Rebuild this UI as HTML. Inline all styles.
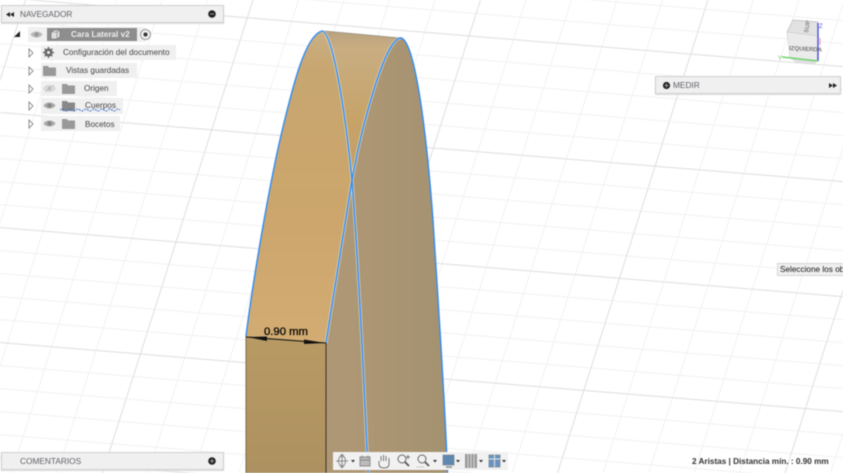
<!DOCTYPE html>
<html lang="es"><head><meta charset="utf-8"><title>Medir</title>
<style>
html,body{margin:0;padding:0;background:#fff}
#r{position:relative;width:843px;height:473px;overflow:hidden;background:#fff;font-family:"Liberation Sans",sans-serif;filter:blur(.55px)}
#r>svg{position:absolute;left:0;top:0}
.p{position:absolute;background:#f0f0f0;box-sizing:border-box}
.b{border:1px solid #cfcfcf;box-shadow:0 1px 1px #ddd}
.t{position:absolute;white-space:nowrap}
.n{font-size:8.3px;color:#5f5f66;line-height:12px}
.row{font-size:8.2px;color:#444;line-height:12px}
</style></head><body><div id="r">
<svg width="843" height="473" viewBox="0 0 843 473">
<defs>
<linearGradient id="lf" x1="0" y1="31" x2="0" y2="343" gradientUnits="userSpaceOnUse"><stop offset="0" stop-color="#c9b086"/><stop offset=".12" stop-color="#c8a670"/><stop offset=".6" stop-color="#cca66c"/><stop offset="1" stop-color="#d2ac72"/></linearGradient>
<linearGradient id="tb" x1="0" y1="31" x2="0" y2="180" gradientUnits="userSpaceOnUse"><stop offset="0" stop-color="#b9a27f"/><stop offset=".12" stop-color="#c9ae82"/><stop offset=".6" stop-color="#c7a368"/><stop offset="1" stop-color="#c4a068"/></linearGradient>
<linearGradient id="rf" x1="352" y1="0" x2="447" y2="0" gradientUnits="userSpaceOnUse"><stop offset="0" stop-color="#ae9775"/><stop offset="1" stop-color="#a49270"/></linearGradient>
<linearGradient id="fr" x1="0" y1="337" x2="0" y2="473" gradientUnits="userSpaceOnUse"><stop offset="0" stop-color="#b89a64"/><stop offset="1" stop-color="#ad9160"/></linearGradient>
<pattern id="g1" patternUnits="userSpaceOnUse" width="44.34" height="22.42" patternTransform="matrix(1 .082 -.318 1 175.7 241.4)"><path d="M0 .5H44.34M.5 0V22.42" stroke="#f2f2f2" stroke-width="1" fill="none"/></pattern>
<pattern id="g2" patternUnits="userSpaceOnUse" width="221.7" height="112.1" patternTransform="matrix(1 .082 -.318 1 175.7 241.4)"><path d="M0 .5H221.7M.5 0V112.1" stroke="#e0e0e0" stroke-width="1" fill="none"/></pattern>
</defs>
<rect width="843" height="473" fill="url(#g1)"/>
<rect width="843" height="473" fill="url(#g2)"/>
<!-- upper band -->
<path d="M322,31 L401,38 C385,38 362,125 352,180 C344,100 332,33 322,31Z" fill="url(#tb)"/>
<path d="M324,31 L400,38" stroke="#8d8270" stroke-width="1" fill="none" opacity=".7"/>
<!-- right face + lower strip -->
<path d="M401,38 C412,40 424,100 433,220 C438,300 445,400 447.5,473 L326,473 L326,343 C335,285 345,225 352,180 C362,125 385,38 401,38Z" fill="url(#rf)"/>
<!-- left face -->
<path d="M246,336 C253,280 270,180 283,127 C292,90 305,35 322,31 C332,33 344,100 352,180 C345,225 335,285 326,343Z" fill="url(#lf)"/>
<!-- front block -->
<path d="M246,336 L326,343 L326,473 L246,473Z" fill="url(#fr)"/>
<path d="M246,336 V473" stroke="#7d6c4c" stroke-width="1"/>
<path d="M326,343 V473" stroke="#3a3222" stroke-width="1"/>
<!-- light inner edges -->
<g fill="none" stroke="#e6dcc4" stroke-width="3" opacity=".8">
<path d="M322,31 C332,33 344,100 352,180 C358,260 364,380 368,473"/>
<path d="M401,38 C385,38 362,125 352,180 C345,225 335,285 326,343"/>
</g>
<!-- blue edges -->
<g fill="none" stroke="#2f8cf5" stroke-width="1.4">
<path d="M246,336 C253,280 270,180 283,127 C292,90 305,35 322,31 C332,33 344,100 352,180 C358,260 364,380 368,473"/>
<path d="M447.5,473 C445,400 438,300 433,220 C424,100 412,40 401,38 C385,38 362,125 352,180 C345,225 335,285 326,343"/>
</g>
<!-- dimension -->
<path d="M246,337 L326,343" stroke="#111" stroke-width="1.1"/>
<path d="M247,337 L267,336.5 L267,341Z M325,343 L304,339.5 L304,344Z" fill="#111"/>
<!-- cube -->
<g>
<path d="M793,20 L818,22 L818,36 L787,32Z" fill="#e2e2e2" stroke="#bdbdbd" stroke-width=".7"/>
<path d="M787,32 L818,36 L817,61 L790,58Z" fill="#ebebeb" stroke="#cfcfcf" stroke-width=".6"/>
<path d="M790,58 L817,61 L815,64 L795,62Z" fill="#d0d0d0" opacity=".7"/>
<path d="M818,23 V61" stroke="#4a4ee0" stroke-width="1.4"/>
<path d="M782,57 L818,61" stroke="#6fd26f" stroke-width="1.4"/>
<path d="M820,38 V45" stroke="#f09a9a" stroke-width="1"/>
<text x="778" y="60" font-size="6" fill="#5fd05f" font-family="Liberation Sans">Y</text>
<text x="819" y="28" font-size="6" fill="#5a5ee6" font-family="Liberation Sans">Z</text>
<text x="789" y="50" font-size="6" fill="#777" font-family="Liberation Sans" font-weight="bold" transform="rotate(3 789 50)">IZQUIERDA</text>
<text x="808" y="33" font-size="6" fill="#888" font-family="Liberation Sans" font-weight="bold" transform="rotate(-80 808 33)">SUP</text>
</g>
</svg>

<div class="t" style="left:264px;top:325px;font-size:11.3px;line-height:14px;color:#000;-webkit-text-stroke:.25px #000">0.90 mm</div>

<!-- Navegador -->
<div class="p b" style="left:1px;top:5px;width:223px;height:18px"></div>
<div class="t n" style="left:20px;top:8px">NAVEGADOR</div>
<svg style="left:6px;top:12px" width="8" height="5"><path d="M4,0V5L0,2.500ZM8,0V5L4,2.500Z" fill="#222"/></svg>
<svg style="left:207px;top:9px" width="10" height="10"><circle cx="5" cy="5" r="3.800" fill="#222"/><path d="M3,5H7" stroke="#bbb" stroke-width=".8"/></svg>

<!-- Tree -->
<svg style="left:14px;top:30px" width="8" height="8"><path d="M6,1V7H0Z" fill="#222"/></svg>
<div class="p" style="left:28px;top:27px;width:118px;height:15px"></div>
<svg style="left:30px;top:30px" width="13" height="9"><path d="M.5,4.5C3,.5 10,.5 12.5,4.5C10,8.500 3,8.500 .5,4.500Z" fill="#bbb"/><circle cx="6.500" cy="4.500" r="2.200" fill="#999"/></svg>
<div class="p" style="left:47px;top:28px;width:90px;height:13px;background:#8e8e8e"></div>
<svg style="left:50px;top:29px" width="11" height="11"><path d="M1,3L4,1H10V8L7,10H1Z" fill="#ddd" stroke="#666" stroke-width=".6"/><path d="M7,3H1M7,3V10M7,3L10,1" stroke="#777" stroke-width=".6" fill="none"/></svg>
<div class="t" style="left:71px;top:29px;font-size:8.200px;font-weight:bold;line-height:12px;color:#eee">Cara Lateral v2</div>
<svg style="left:139px;top:28px" width="13" height="13"><circle cx="6.500" cy="6.500" r="5" fill="#eee" stroke="#888" stroke-width=".8"/><circle cx="6.500" cy="6.500" r="2" fill="#333"/></svg>

<div class="p" style="left:41px;top:45px;width:135px;height:15px"></div>
<div class="p" style="left:41px;top:63px;width:96px;height:15px"></div>
<div class="p" style="left:41px;top:81px;width:76px;height:15px"></div>
<div class="p" style="left:41px;top:98px;width:82px;height:16px"></div>
<div class="p" style="left:41px;top:116px;width:79px;height:15px"></div>

<svg style="left:28px;top:48px" width="7" height="82" fill="#fff" stroke="#777" stroke-width=".8"><path d="M1,1V9L5,5Z"/><path d="M1,19V27L5,23Z"/><path d="M1,37V45L5,41Z"/><path d="M1,54V62L5,58Z"/><path d="M1,72V80L5,76Z"/></svg>

<svg style="left:43px;top:47px" width="11" height="11"><circle cx="5.500" cy="5.500" r="3" fill="none" stroke="#666" stroke-width="2"/><path d="M5.500,0V11M0,5.500H11M1.700,1.700L9.300,9.300M9.300,1.700L1.700,9.300" stroke="#666" stroke-width="1.400"/><circle cx="5.500" cy="5.500" r="1.500" fill="#f0f0f0"/></svg>
<svg style="left:43px;top:65px" width="13" height="11"><path d="M0,1H5L6,2.500H13V11H0Z" fill="#999"/></svg>
<svg style="left:62px;top:83px" width="13" height="11"><path d="M0,1H5L6,2.500H13V11H0Z" fill="#999"/></svg>
<svg style="left:62px;top:100px" width="13" height="11"><path d="M0,1H5L6,2.500H13V11H0Z" fill="#888"/></svg>
<svg style="left:62px;top:118px" width="13" height="11"><path d="M0,1H5L6,2.500H13V11H0Z" fill="#999"/></svg>
<svg style="left:43px;top:84px" width="13" height="9"><path d="M.5,4.500C3,.5 10,.5 12.500,4.500C10,8.500 3,8.500 .5,4.500Z" fill="#ddd" stroke="#bbb" stroke-width=".5"/><circle cx="6.500" cy="4.500" r="2" fill="#bbb"/><path d="M2,8L11,1" stroke="#bbb" stroke-width=".7"/></svg>
<svg style="left:43px;top:101px" width="13" height="9"><path d="M.5,4.500C3,.5 10,.5 12.500,4.500C10,8.500 3,8.500 .5,4.500Z" fill="#aaa"/><circle cx="6.500" cy="4.500" r="2.200" fill="#888"/></svg>
<svg style="left:43px;top:119px" width="13" height="9"><path d="M.5,4.500C3,.5 10,.5 12.500,4.500C10,8.500 3,8.500 .5,4.500Z" fill="#aaa"/><circle cx="6.500" cy="4.500" r="2.200" fill="#888"/></svg>
<svg style="left:60px;top:108px" width="62" height="4"><path d="M0,2 Q2,0 4,2 T8,2 T12,2 T16,2 T20,2 T24,2 T28,2 T32,2 T36,2 T40,2 T44,2 T48,2 T52,2 T56,2 T60,2" fill="none" stroke="#3f70c8" stroke-width="1" stroke-dasharray="2 1"/></svg>

<div class="t row" style="left:63px;top:47px">Configuración del documento</div>
<div class="t row" style="left:66px;top:65px">Vistas guardadas</div>
<div class="t row" style="left:84px;top:83px">Origen</div>
<div class="t row" style="left:85px;top:100px">Cuerpos</div>
<div class="t row" style="left:85px;top:119px">Bocetos</div>

<!-- Medir -->
<div class="p b" style="left:655px;top:76px;width:186px;height:18px"></div>
<svg style="left:662px;top:81px" width="9" height="9"><circle cx="4.500" cy="4.500" r="3.600" fill="#222"/><path d="M2.500,4.500H6.500M4.500,2.500V6.500" stroke="#bbb" stroke-width=".8"/></svg>
<div class="t n" style="left:673px;top:79px">MEDIR</div>
<svg style="left:829px;top:83px" width="8" height="5"><path d="M0,0V5L4,2.500ZM4,0V5L8,2.500Z" fill="#222"/></svg>

<!-- Tooltip -->
<div class="p" style="left:777px;top:263px;width:66px;height:13px;border:1px solid #d4d4d4;border-right:0;overflow:hidden"><div class="t" style="left:2px;top:0;font-size:8.200px;line-height:11px;color:#111">Seleccione los objetos</div></div>

<!-- Comentarios -->
<div class="p b" style="left:1px;top:452px;width:223px;height:18px"></div>
<div class="t n" style="left:20px;top:455px">COMENTARIOS</div>
<svg style="left:207px;top:456px" width="10" height="10"><circle cx="5" cy="5" r="3.800" fill="#222"/><path d="M3,5H7M5,3V7" stroke="#bbb" stroke-width=".8"/></svg>

<!-- Toolbar -->
<div class="p" style="left:333px;top:452px;width:175px;height:18px;background:#f1f1f1"></div>
<svg style="left:334px;top:452px" width="174" height="18">
<g fill="none" stroke="#8a8a8a" stroke-width="1">
<path d="M8,2V16M2,9H14M8,2L6,4.500M8,2L10,4.500M8,16L6,13.500M8,16L10,13.500"/><ellipse cx="8" cy="9" rx="3.500" ry="5"/>
<path d="M26,5H36V14H26Z" fill="#bbb"/><path d="M26,8H36M28,3.500V6M34,3.500V6"/>
<path d="M45,9V12C45,15 47,16 50,16C53,16 55,15 55,12V7M47,9V4M49.500,9V3M52,9V4M55,9V6" stroke="#777"/>
<circle cx="68" cy="7" r="4" stroke="#666"/><path d="M71,10L75,14" stroke="#555" stroke-width="1.800"/><path d="M74,3V7M72,5H76" stroke="#777"/>
<circle cx="88" cy="7" r="4" stroke="#666"/><path d="M91,10L95,14" stroke="#555" stroke-width="1.800"/><path d="M83,15H91" stroke="#aaa" stroke-dasharray="1 1"/>
</g>
<path d="M109,3H120V13H109Z" fill="#5f87b0" stroke="#7a8896" stroke-width=".8"/><path d="M112,15H118" stroke="#888" stroke-width="1.500"/>
<path d="M131,2H143V16H131Z" fill="#9a9a9a"/><path d="M134,2V16M137,2V16M140,2V16" stroke="#ddd" stroke-width=".9"/>
<path d="M155,3H166V15H155Z" fill="#6b93bd" stroke="#7a8896" stroke-width=".8"/><path d="M160.500,3V15M155,7H166" stroke="#e8e8e8" stroke-width="1"/>
<path d="M17,8H21L19,10.500ZM99,8H103L101,10.500ZM122,8H126L124,10.500ZM145,8H149L147,10.500ZM168,8H172L170,10.500Z" fill="#333"/>
</svg>

<!-- Status -->
<div class="t" style="left:692px;top:456px;font-size:8.200px;font-weight:bold;line-height:12px;color:#333">2 Aristas | Distancia mín. : 0.90 mm</div>
</div></body></html>
